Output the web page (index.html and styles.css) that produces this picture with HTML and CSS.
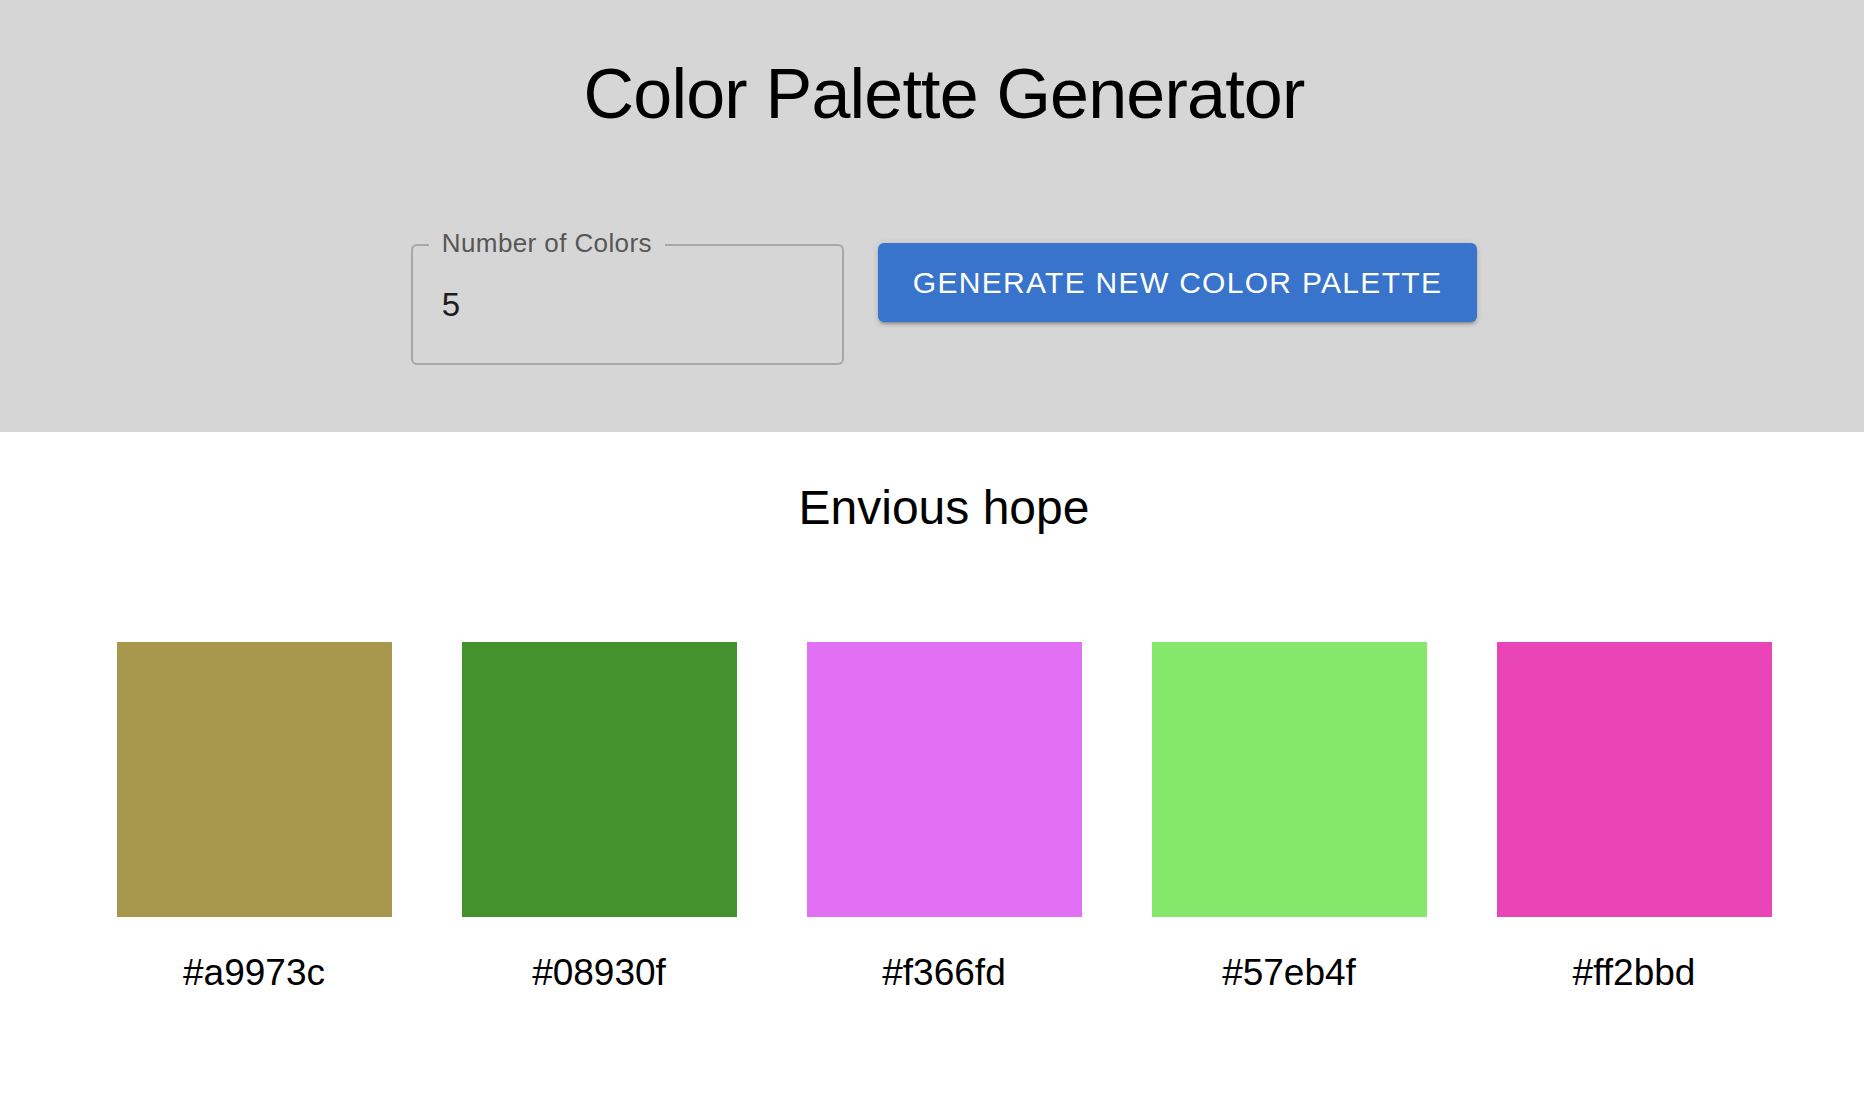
FILE: index.html
```html
<!DOCTYPE html>
<html lang="en">
<head>
<meta charset="utf-8">
<title>Color Palette Generator</title>
<link rel="stylesheet" href="styles.css">
</head>
<body>
  <header class="header">
    <h1 class="title">Color Palette Generator</h1>
    <div class="controls">
      <div class="field">
        <label class="field-label" for="count">Number of Colors</label>
        <input class="field-input" id="count" type="text" value="5">
      </div>
      <button class="generate-btn" type="button">Generate New Color Palette</button>
    </div>
  </header>
  <main class="palette">
    <h2 class="palette-name">Envious hope</h2>
    <div class="swatches">
      <div class="swatch-item">
        <div class="swatch" style="background:#a7974c"></div>
        <div class="swatch-label">#a9973c</div>
      </div>
      <div class="swatch-item">
        <div class="swatch" style="background:#44922d"></div>
        <div class="swatch-label">#08930f</div>
      </div>
      <div class="swatch-item">
        <div class="swatch" style="background:#e170f4"></div>
        <div class="swatch-label">#f366fd</div>
      </div>
      <div class="swatch-item">
        <div class="swatch" style="background:#86e86a"></div>
        <div class="swatch-label">#57eb4f</div>
      </div>
      <div class="swatch-item">
        <div class="swatch" style="background:#ea45b6"></div>
        <div class="swatch-label">#ff2bbd</div>
      </div>
    </div>
  </main>
</body>
</html>
```

FILE: styles.css
```css
* {
  box-sizing: border-box;
}

html, body {
  margin: 0;
  padding: 0;
  background: #ffffff;
}

body {
  font-family: "Liberation Sans", Arial, Helvetica, sans-serif;
  color: #000000;
}

.header {
  background: #d6d6d6;
  height: 432px;
  padding: 59px 0 0 24px;
  display: flex;
  flex-direction: column;
  align-items: center;
}

.title {
  margin: 0;
  font-size: 70px;
  line-height: 70px;
  font-weight: 400;
  letter-spacing: -0.8px;
  color: #000;
}

.controls {
  margin-top: 114px;
  display: flex;
  align-items: flex-start;
  gap: 34px;
}

.field {
  position: relative;
  margin-top: 1px;
}

.field-label {
  position: absolute;
  left: 18px;
  top: -14px;
  padding: 0 13px;
  background: #d6d6d6;
  font-size: 26px;
  line-height: 26px;
  color: #575757;
  letter-spacing: 0.4px;
}

.field-input {
  display: block;
  width: 433px;
  height: 121px;
  border: 2px solid #a7a7a7;
  border-radius: 6px;
  background: transparent;
  padding: 0 29px;
  font-family: inherit;
  font-size: 33px;
  color: #1c1c1c;
  outline: none;
}

.generate-btn {
  height: 79px;
  padding: 0 35px;
  border: none;
  border-radius: 6px;
  background: #3874cc;
  color: #ffffff;
  font-family: inherit;
  font-size: 30px;
  letter-spacing: 1.3px;
  text-transform: uppercase;
  box-shadow: 0 4px 2px -3px rgba(0,0,0,0.2), 0 3px 3px 0 rgba(0,0,0,0.14), 0 1px 7px 0 rgba(0,0,0,0.12);
  cursor: pointer;
}

.palette {
  padding-left: 24px;
  display: flex;
  flex-direction: column;
  align-items: center;
}

.palette-name {
  margin: 52px 0 0;
  font-size: 48px;
  line-height: 48px;
  font-weight: 400;
}

.swatches {
  margin-top: 110px;
  display: flex;
  gap: 70px;
}

.swatch-item {
  width: 275px;
  display: flex;
  flex-direction: column;
  align-items: center;
}

.swatch {
  width: 275px;
  height: 275px;
}

.swatch-label {
  margin-top: 38px;
  font-size: 37px;
  line-height: 36px;
}
```
